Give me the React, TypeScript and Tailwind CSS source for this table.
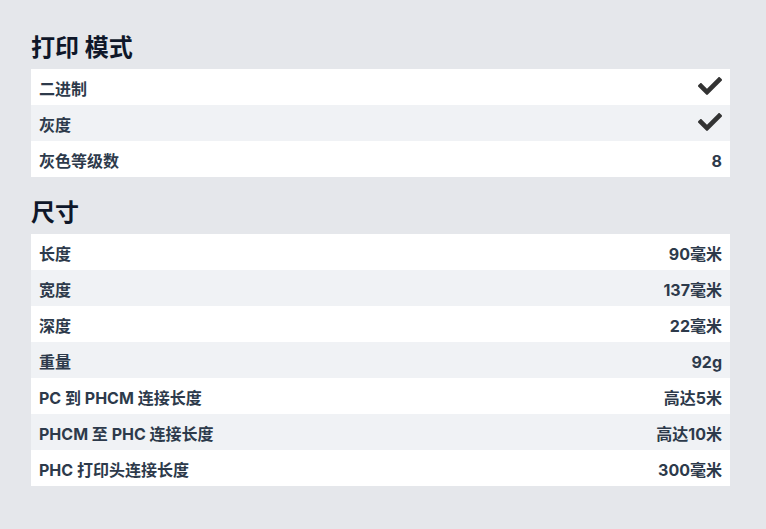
import { FaCheck } from 'react-icons/fa';

type Row = { label: string; value: string | null };

const printMode: Row[] = [
    { label: '二进制', value: null },
    { label: '灰度', value: null },
    { label: '灰色等级数', value: '8' },
];

const dimensions: Row[] = [
    { label: '长度', value: '90毫米' },
    { label: '宽度', value: '137毫米' },
    { label: '深度', value: '22毫米' },
    { label: '重量', value: '92g' },
    { label: 'PC 到 PHCM 连接长度', value: '高达5米' },
    { label: 'PHCM 至 PHC 连接长度', value: '高达10米' },
    { label: 'PHC 打印头连接长度', value: '300毫米' },
];

function SpecTable({ rows }: { rows: Row[] }) {
    return (
        <div className="flex flex-col">
            {rows.map((row, i) => (
                <div
                    key={row.label}
                    className={`flex items-center justify-between h-9 px-2 pt-1 ${i % 2 === 1 ? 'bg-[#f0f2f5]' : 'bg-white'}`}
                >
                    <span className="text-base font-bold text-[#2d3a4b]">{row.label}</span>
                    {row.value === null ? (
                        <FaCheck className="text-[#333] w-6 h-6 -mt-1.5" />
                    ) : (
                        <span className="text-base font-bold text-[#2d3a4b]">{row.value}</span>
                    )}
                </div>
            ))}
        </div>
    );
}

export default function App() {
    return (
        <div
            className="min-h-[529px] bg-[#e5e7eb] pt-8 pl-[31px] pr-9"
            style={{ fontFamily: 'Inter, "Noto Sans CJK SC", sans-serif' }}
        >
            <h2 className="text-2xl leading-8 font-bold text-[#0f1729] mb-[5px]">打印 模式</h2>
            <SpecTable rows={printMode} />
            <h2 className="text-2xl leading-8 font-bold text-[#0f1729] mt-5 mb-[5px]">尺寸</h2>
            <SpecTable rows={dimensions} />
        </div>
    );
}
